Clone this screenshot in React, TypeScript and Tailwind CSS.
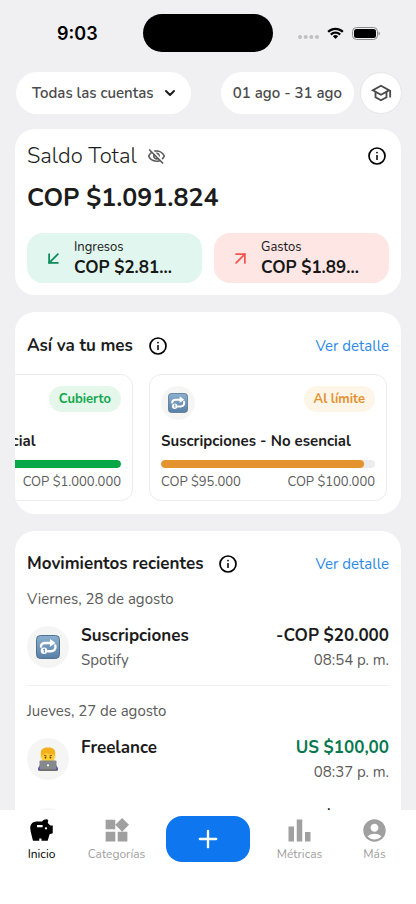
import type { ReactNode } from "react"
import { MdAccountCircle, MdBarChart, MdOutlineSchool, MdOutlineVisibilityOff, MdSavings, MdWidgets } from "react-icons/md"
import { FiArrowDownLeft, FiArrowUpRight, FiChevronDown, FiPlus } from "react-icons/fi"

function StatusBar() {
  return (
    <div className="grid grid-cols-3 items-center h-[38px] mt-[14px]">
      <span className="text-center pl-4 font-['Inter'] font-semibold text-[18px] text-black">9:03</span>
      <div className="h-[38px] w-[130px] justify-self-center rounded-full bg-black" />
      <div className="flex items-center justify-end gap-2 pr-9">
        <svg width="22" height="12" viewBox="0 0 22 12" fill="#c0c0c2">
          <circle cx="3" cy="10" r="2" />
          <circle cx="8.7" cy="10" r="2" />
          <circle cx="14.3" cy="10" r="2" />
          <circle cx="20" cy="10" r="2" />
        </svg>
        <svg width="17" height="13" viewBox="0 0 17 12" fill="#000">
          <path d="M8.5 2.4c2.4 0 4.6.9 6.3 2.5.1.1.3.1.4 0l1.2-1.2c.1-.1.1-.3 0-.4C12-.9 5-.9.6 3.3c-.1.1-.1.3 0 .4l1.2 1.2c.1.1.3.1.4 0 1.7-1.6 3.9-2.5 6.3-2.5Z" />
          <path d="M8.5 6.3c1.3 0 2.6.5 3.5 1.4.1.1.3.1.5 0l1.2-1.2c.1-.1.1-.3 0-.4-2.9-2.7-7.4-2.7-10.4 0-.1.1-.1.3 0 .4l1.2 1.2c.1.1.3.1.5 0 .9-.9 2.2-1.4 3.5-1.4Z" />
          <path d="M10.9 9c.1-.1.1-.3 0-.4a3.7 3.7 0 0 0-4.8 0c-.1.1-.1.3 0 .4l2.2 2.2c.1.1.3.1.4 0Z" />
        </svg>
        <svg width="28" height="13" viewBox="0 0 28 13">
          <rect x=".5" y=".5" width="25" height="12" rx="4" fill="none" stroke="#8a8a8c" />
          <rect x="2" y="2" width="22" height="9" rx="2.5" fill="#000" />
          <path d="M26.5 4.5v4c1-.4 1.3-1.1 1.3-2s-.4-1.6-1.3-2Z" fill="#8a8a8c" />
        </svg>
      </div>
    </div>
  )
}

function InfoButton() {
  return (
    <button type="button" aria-label="Información" className="text-black">
      <svg width="20" height="20" viewBox="0 0 20 20" fill="none" stroke="currentColor">
        <circle cx="10" cy="10" r="8" strokeWidth="1.7" />
        <path d="M10 9v5" strokeWidth="1.5" />
        <circle cx="10" cy="6.6" r=".9" fill="currentColor" stroke="none" />
      </svg>
    </button>
  )
}

function RepeatOneEmoji({ className }: { className: string }) {
  return (
    <svg viewBox="0 0 24 24" className={className}>
      <defs>
        <linearGradient id="tile" x1="0" y1="0" x2="0" y2="1">
          <stop offset="0" stopColor="#8db0cf" />
          <stop offset="1" stopColor="#587fa6" />
        </linearGradient>
      </defs>
      <rect x=".5" y=".5" width="23" height="23" rx="4" fill="url(#tile)" stroke="#50718f" />
      <path d="M5 11.5C5 9 7 8 9.5 8H15" fill="none" stroke="#fff" strokeWidth="2.4" strokeLinecap="round" />
      <path d="M14 4 19.5 8 14 11.8Z" fill="#fff" />
      <path d="M19.3 10.5c1 4-1.8 5.7-4.3 5.7h-3" fill="none" stroke="#fff" strokeWidth="2.4" strokeLinecap="round" />
      <circle cx="8" cy="15.8" r="3.3" fill="#fff" />
      <path d="m7.3 14.7 1-.7v3.6" fill="none" stroke="#587fa6" />
    </svg>
  )
}

function TechnologistEmoji({ className }: { className: string }) {
  return (
    <svg viewBox="0 0 24 24" className={className}>
      <path d="M2 23c0-4 3-6 6-6h8c3 0 6 2 6 6Z" fill="#4b35c9" />
      <rect x="5.5" y="2" width="13" height="14" rx="5" fill="#ffcc33" />
      <path d="M4.8 12V6C4.8 2 7.5.5 12 .5S19.2 2 19.2 6v6l-1.4-5c-3.8.5-5.8-.2-7.8-1.5C9 7 7.5 7.5 6.2 8Z" fill="#f2b01c" />
      <path d="m8 8.3 2.5.7M13.5 9l2.5-.7" stroke="#7a5200" />
      <circle cx="9.5" cy="10.6" r=".9" fill="#5c3b00" />
      <circle cx="14.5" cy="10.6" r=".9" fill="#5c3b00" />
      <rect x="3.5" y="13.5" width="17" height="9.5" rx="1" fill="#85898c" />
      <path d="M2.5 22.3h19V24h-19Z" fill="#6c7073" />
      <circle cx="12" cy="18.3" r="1.1" fill="#fff" />
    </svg>
  )
}

function SummaryTile({ label, amount, icon, tone }: { label: string; amount: string; icon: ReactNode; tone: string }) {
  return (
    <div className={`flex flex-1 items-center gap-[10px] rounded-2xl h-[50px] pl-4 text-[#171717] ${tone}`}>
      {icon}
      <div>
        <p className="text-[13px] leading-5">{label}</p>
        <p className="text-[17px] leading-[22px] font-bold">{amount}</p>
      </div>
    </div>
  )
}

function SectionHeader({ title }: { title: string }) {
  return (
    <div className="flex items-center px-3 h-6">
      <h2 className="text-[17px] font-bold mr-[15px]">{title}</h2>
      <InfoButton />
      <a href="#detalle" className="ml-auto text-[15px] text-[#2b8ae6]">
        Ver detalle
      </a>
    </div>
  )
}

type Budget = {
  name: string
  status: string
  badge: string
  bar: string
  spent: string
  limit: string
  percent: number
}

const budgets: Budget[] = [
  {
    name: "Casa - No esencial",
    status: "Cubierto",
    badge: "bg-[#e5f6eb] text-[#12a84c]",
    bar: "bg-[#07a647]",
    spent: "",
    limit: "COP $1.000.000",
    percent: 100,
  },
  {
    name: "Suscripciones - No esencial",
    status: "Al límite",
    badge: "bg-[#fdf5e8] text-[#e4922f]",
    bar: "bg-[#e4932e]",
    spent: "COP $95.000",
    limit: "COP $100.000",
    percent: 95,
  },
]

function BudgetCard({ budget }: { budget: Budget }) {
  return (
    <article className="w-[238px] shrink-0 rounded-xl border border-[#ececee] px-[11px] pt-[11px] pb-2">
      <div className="flex items-start justify-between">
        <span className="grid place-items-center size-[34px] rounded-full bg-[#f5f5f4]">
          <RepeatOneEmoji className="size-5" />
        </span>
        <span className={`rounded-full px-[10px] leading-[26px] text-[13px] font-bold ${budget.badge}`}>
          {budget.status}
        </span>
      </div>
      <h3 className="mt-[11px] text-[15px] leading-5 font-bold whitespace-nowrap">{budget.name}</h3>
      <div className="mt-[9px] h-2 rounded-full bg-[#ececed] overflow-hidden">
        <div className={`h-full rounded-full ${budget.bar}`} style={{ width: `${budget.percent}%` }} />
      </div>
      <div className="mt-1 flex justify-between text-[13px] leading-5 text-[#5c5c5c]">
        <span>{budget.spent}</span>
        <span>{budget.limit}</span>
      </div>
    </article>
  )
}

type MovementProps = {
  icon?: ReactNode
  title?: string
  note?: string
  amount: string
  time?: string
  income?: boolean
}

function Movement({ icon, title, note, amount, time, income }: MovementProps) {
  return (
    <div className="flex items-start">
      <span className="mt-[2px] grid place-items-center size-[42px] rounded-full bg-[#f5f5f4]">{icon}</span>
      <div className="ml-3">
        <p className="text-[17px] leading-6 font-bold">{title}</p>
        <p className="text-[15px] leading-6 text-[#5c5c5c]">{note}</p>
      </div>
      <div className="ml-auto text-right">
        <p className={`text-[17px] leading-6 font-bold ${income ? "text-[#08784f]" : ""}`}>{amount}</p>
        <p className="text-[15px] leading-6 text-[#5c5c5c]">{time}</p>
      </div>
    </div>
  )
}

function NavItem({ icon, label, active }: { icon: ReactNode; label: string; active?: boolean }) {
  return (
    <a
      href={`#${label.toLowerCase()}`}
      className={`flex flex-1 flex-col items-center text-xs leading-5 ${active ? "text-black" : "text-[#a0a0a0]"}`}
    >
      <span className="flex items-center h-7">{icon}</span>
      {label}
    </a>
  )
}

export default function App() {
  return (
    <div className="flex flex-col h-screen overflow-hidden bg-[#f0f0f2] font-['Nunito','Open_Sans',sans-serif] text-[#1c1c1c]">
      <StatusBar />

      <header className="flex items-center mt-5 pl-4 pr-[14px] pb-[15px] text-[15px] font-semibold text-[#4a4a4a]">
        <button type="button" className="flex items-center gap-2 h-[42px] rounded-full bg-white pl-4 pr-[13px]">
          Todas las cuentas
          <FiChevronDown size={16} strokeWidth={3} className="text-[#1c1c1c]" />
        </button>
        <button type="button" className="ml-auto h-[42px] rounded-full bg-white px-3">
          01 ago - 31 ago
        </button>
        <button
          type="button"
          aria-label="Aprender"
          className="ml-[6px] grid place-items-center size-[42px] rounded-full bg-white border border-[#e6e6e8]"
        >
          <MdOutlineSchool size={22} />
        </button>
      </header>

      <main className="flex flex-1 flex-col gap-[17px] min-h-0 overflow-y-auto [scrollbar-width:none] px-[15px]">
        <section className="shrink-0 rounded-[20px] bg-white p-3">
          <div className="flex items-center h-[30px]">
            <h1 className="text-[22px] font-light">Saldo Total</h1>
            <button type="button" aria-label="Ocultar saldo" className="ml-[10px] text-[#5a5a5a]">
              <MdOutlineVisibilityOff size={19} />
            </button>
            <span className="ml-auto mr-[2px] flex">
              <InfoButton />
            </span>
          </div>
          <p className="mt-2 text-[25px] leading-[38px] font-bold">COP $1.091.824</p>
          <div className="mt-4 flex gap-3">
            <SummaryTile
              label="Ingresos"
              amount="COP $2.81..."
              tone="bg-[#e0f6ee]"
              icon={<FiArrowDownLeft size={21} className="text-[#0b8a5b]" />}
            />
            <SummaryTile
              label="Gastos"
              amount="COP $1.89..."
              tone="bg-[#fde6e4]"
              icon={<FiArrowUpRight size={21} className="text-[#f2544e]" />}
            />
          </div>
        </section>

        <section className="shrink-0 rounded-[20px] bg-white pt-[22px] pb-[13px] overflow-hidden">
          <SectionHeader title="Así va tu mes" />
          <div className="mt-4 flex justify-end gap-4 overflow-hidden pr-[14px]">
            {budgets.map((budget) => (
              <BudgetCard key={budget.name} budget={budget} />
            ))}
          </div>
        </section>

        <section className="shrink-0 rounded-t-[20px] bg-white pt-[21px] pb-4">
          <SectionHeader title="Movimientos recientes" />
          <div className="px-3">
            <p className="mt-[11px] mb-[13px] text-[15px] leading-6 text-[#5c5c5c]">Viernes, 28 de agosto</p>
            <Movement
              icon={<RepeatOneEmoji className="size-6" />}
              title="Suscripciones"
              note="Spotify"
              amount="-COP $20.000"
              time="08:54 p. m."
            />
            <hr className="mt-[13px] border-[#f0f0f1]" />
            <p className="mt-[13px] mb-[13px] text-[15px] leading-6 text-[#5c5c5c]">Jueves, 27 de agosto</p>
            <div className="flex flex-col gap-[22px]">
              <Movement
                icon={<TechnologistEmoji className="size-6" />}
                title="Freelance"
                amount="US $100,00"
                time="08:37 p. m."
                income
              />
              <Movement amount="-COP $50.000" />
            </div>
          </div>
        </section>
      </main>

      <nav className="flex shrink-0 items-start bg-white px-1 pt-[6px] pb-10">
        <NavItem active icon={<MdSavings size={27} />} label="Inicio" />
        <NavItem icon={<MdWidgets size={29} />} label="Categorías" />
        <button
          type="button"
          aria-label="Agregar"
          className="mx-3 grid place-items-center w-[84px] h-[46px] rounded-2xl bg-[#0e76ee] text-white"
        >
          <FiPlus size={28} />
        </button>
        <NavItem icon={<MdBarChart size={33} />} label="Métricas" />
        <NavItem icon={<MdAccountCircle size={27} />} label="Más" />
      </nav>
    </div>
  )
}
